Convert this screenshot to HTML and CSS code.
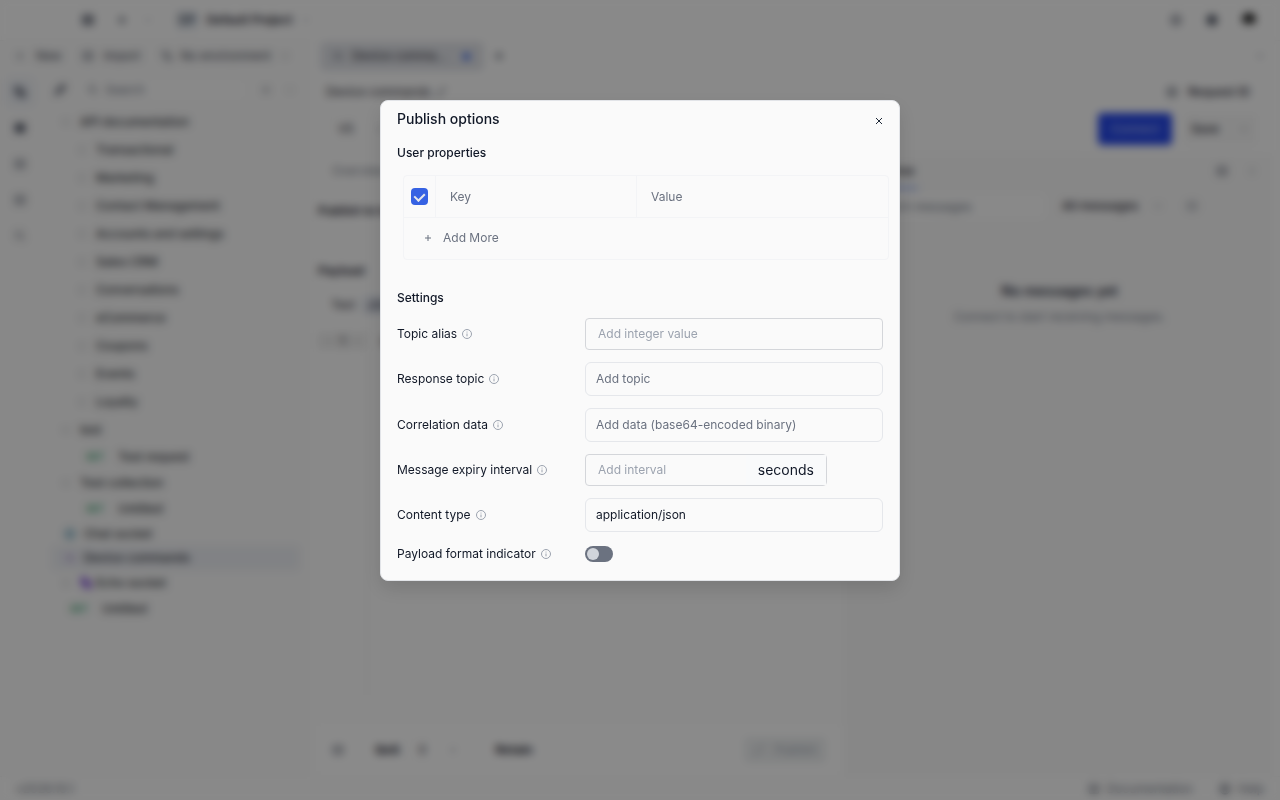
FILE: index.html
```html
<!DOCTYPE html>
<html lang="en">
<head>
  <meta charset="UTF-8" />
  <meta name="viewport" content="width=device-width, initial-scale=1.0">
  <title>Device commands</title>
  <link rel="stylesheet" href="styles.css">
</head>
<body>

  <!-- Shared icons -->
  <svg class="sprite" aria-hidden="true">
    <symbol id="down" viewBox="0 0 12 12"><path d="M3 4.5l3 3 3-3" /></symbol>
    <symbol id="right" viewBox="0 0 12 12"><path d="M4.5 3l3 3-3 3" /></symbol>
    <symbol id="plus" viewBox="0 0 12 12"><path d="M6 2.5v7M2.5 6h7" /></symbol>
    <symbol id="box" viewBox="0 0 12 12"><path d="M1.5 2h9v8h-9zM1.5 5h9M6 5v5" /></symbol>
    <symbol id="search" viewBox="0 0 12 12"><path d="M5 1.5a3.5 3.5 0 1 0 0 7 3.5 3.5 0 0 0 0-7M7.5 7.5l3 3" /></symbol>
    <symbol id="blocks" viewBox="0 0 12 12"><path d="M1.5 1.5h5v5h-5zM5.5 5.5h5v5h-5z" /></symbol>
    <symbol id="globe" viewBox="0 0 12 12"><path d="M6 1a5 5 0 1 0 0 10A5 5 0 0 0 6 1M1 6h10M6 1c-3 3-3 7 0 10c3-3 3-7 0-10" /></symbol>
    <symbol id="pencil" viewBox="0 0 12 12"><path d="M2 10l1-3 6-6 2 2-6 6z" /></symbol>
    <symbol id="wave" viewBox="0 0 12 12"><path d="M1 4h10M1 8h10M4 2v2M8 8v2" /></symbol>
    <symbol id="info" viewBox="0 0 12 12"><circle cx="6" cy="6" r="4.5" /><path d="M6 5.5v2.8M6 3.6v.9" /></symbol>
  </svg>

  <div class="app">
    <header class="topbar">
      <svg class="icon heavy"><use href="#box" /></svg>
      <svg class="icon heavy"><use href="#plus" /></svg>
      <svg class="icon faint"><use href="#down" /></svg>
      <span class="project-badge">DP</span>
      <strong class="project-name">Default Project</strong>
      <svg class="icon faint chevron"><use href="#down" /></svg>
      <div class="topbar-right">
        <svg class="icon"><use href="#globe" /></svg>
        <svg class="icon solid"><use href="#globe" /></svg>
        <span class="avatar"></span>
      </div>
    </header>

    <div class="workspace">
      <aside class="sidebar">
        <div class="sidebar-tools">
          <button class="plain"><svg class="icon"><use href="#plus" /></svg>New</button>
          <button class="plain"><svg class="icon"><use href="#box" /></svg>Import</button>
          <button class="plain environment"><svg class="icon"><use href="#blocks" /></svg>No environment<svg class="icon"><use href="#down" /></svg></button>
        </div>
        <div class="sidebar-body">
          <nav class="rail">
            <a class="rail-item active" href="#" aria-label="Collections"><svg class="icon"><use href="#blocks" /></svg></a>
            <a class="rail-item" href="#" aria-label="Environments"><svg class="icon solid"><use href="#box" /></svg></a>
            <a class="rail-item" href="#" aria-label="Servers"><svg class="icon"><use href="#box" /></svg></a>
            <a class="rail-item" href="#" aria-label="Tests"><svg class="icon"><use href="#box" /></svg></a>
            <a class="rail-item" href="#" aria-label="History"><svg class="icon"><use href="#search" /></svg></a>
          </nav>
          <div class="explorer">
            <div class="search-row">
              <svg class="icon heavy"><use href="#pencil" /></svg>
              <label class="search"><svg class="icon"><use href="#search" /></svg><input type="text" placeholder="Search" aria-label="Search"></label>
              <svg class="icon"><use href="#plus" /></svg>
              <svg class="icon faint"><use href="#down" /></svg>
            </div>
            <ul class="tree">
              <li class="folder"><svg class="icon"><use href="#down" /></svg>API documentation</li>
              <li class="folder child"><svg class="icon"><use href="#right" /></svg>Transactional</li>
              <li class="folder child"><svg class="icon"><use href="#right" /></svg>Marketing</li>
              <li class="folder child"><svg class="icon"><use href="#right" /></svg>Contact Management</li>
              <li class="folder child"><svg class="icon"><use href="#right" /></svg>Accounts and settings</li>
              <li class="folder child"><svg class="icon"><use href="#right" /></svg>Sales CRM</li>
              <li class="folder child"><svg class="icon"><use href="#right" /></svg>Conversations</li>
              <li class="folder child"><svg class="icon"><use href="#right" /></svg>eCommerce</li>
              <li class="folder child"><svg class="icon"><use href="#right" /></svg>Coupons</li>
              <li class="folder child"><svg class="icon"><use href="#right" /></svg>Events</li>
              <li class="folder child"><svg class="icon"><use href="#right" /></svg>Loyalty</li>
              <li class="folder"><svg class="icon"><use href="#down" /></svg>test</li>
              <li class="request nested"><span class="method">GET</span>Test request</li>
              <li class="request-folder"><svg class="icon"><use href="#down" /></svg>Test collection</li>
              <li class="request nested"><span class="method">GET</span>Untitled</li>
              <li class="socket"><svg class="icon teal"><use href="#globe" /></svg>Chat socket</li>
              <li class="socket selected"><svg class="icon purple"><use href="#wave" /></svg>Device commands</li>
              <li class="request-folder"><svg class="icon"><use href="#right" /></svg><span class="echo"><svg class="icon violet"><use href="#blocks" /></svg>Echo socket</span></li>
              <li class="request"><span class="method">GET</span>Untitled</li>
            </ul>
          </div>
        </div>
      </aside>

      <main class="editor">
        <div class="tabs">
          <div class="tab"><svg class="icon"><use href="#wave" /></svg>Device comma...<span class="dot"></span></div>
          <svg class="icon heavy"><use href="#plus" /></svg>
          <svg class="icon push"><use href="#down" /></svg>
        </div>
        <div class="title-row">
          <span>Device commands</span>
          <svg class="icon"><use href="#pencil" /></svg>
          <button class="plain push"><svg class="icon"><use href="#globe" /></svg>Request ID</button>
        </div>
        <div class="url-row">
          <div class="url-bar"><span>V5</span><svg class="icon"><use href="#down" /></svg></div>
          <button class="connect">Connect</button>
          <button class="save">Save<svg class="icon"><use href="#down" /></svg></button>
        </div>
        <div class="panes">
          <section class="message-pane">
            <div class="pane-tabs"><span>Overview</span></div>
            <div class="message-body">
              <h3>Publish to topic</h3>
              <h3>Payload</h3>
              <div class="formats"><span>Text</span><span class="format active">JSON</span></div>
              <div class="code">
                <div class="gutter"><span class="line">1</span></div>
                <div class="code-text">{}</div>
              </div>
            </div>
            <div class="publish-bar">
              <svg class="icon"><use href="#box" /></svg>
              <strong class="qos">QoS</strong>
              <span class="qos-select">0<svg class="icon"><use href="#down" /></svg></span>
              <strong>Retain</strong>
              <button class="publish" disabled><svg class="icon"><use href="#pencil" /></svg>Publish</button>
            </div>
          </section>
          <section class="response-pane">
            <div class="pane-tabs">
              <span class="pane-tab">Response</span>
              <svg class="icon push"><use href="#box" /></svg>
              <svg class="icon"><use href="#right" /></svg>
            </div>
            <div class="filters">
              <input class="filter-input" type="text" placeholder="Search messages" aria-label="Search messages">
              <button class="plain filter">All messages<svg class="icon"><use href="#down" /></svg></button>
              <svg class="icon faint"><use href="#box" /></svg>
            </div>
            <div class="empty">
              <h2>No messages yet</h2>
              <p>Connect to start receiving messages.</p>
            </div>
          </section>
        </div>
      </main>
    </div>

    <footer class="status">
      <span>v2026.10.1</span>
      <a href="#" class="push"><svg class="icon"><use href="#box" /></svg>Documentation</a>
      <a href="#"><svg class="icon"><use href="#globe" /></svg>Help</a>
    </footer>
  </div>

  <!-- Publish options modal -->
  <div class="overlay">
    <div class="modal" role="dialog" aria-labelledby="modalTitle">
      <div class="modal-header">
        <h1 id="modalTitle">Publish options</h1>
        <button class="close" aria-label="Close"><svg viewBox="0 0 12 12"><path d="M3 3l6 6M9 3l-6 6" /></svg></button>
      </div>

      <h2 class="modal-subtitle">User properties</h2>
      <table class="properties">
        <tr>
          <td class="check-cell"><input type="checkbox" class="check" aria-label="Enable all" checked></td>
          <th class="key-cell">Key</th>
          <th>Value</th>
        </tr>
        <tr>
          <td colspan="3" class="add-cell"><button class="add-more"><svg viewBox="0 0 12 12"><path d="M6 3v6M3 6h6" /></svg>Add More</button></td>
        </tr>
      </table>

      <h2 class="modal-subtitle">Settings</h2>
      <div class="settings">
        <div class="setting">
          <label for="topicAlias">Topic alias</label><svg class="info"><use href="#info" /></svg>
          <input type="text" id="topicAlias" class="field number" placeholder="Add integer value">
        </div>
        <div class="setting">
          <label for="responseTopic">Response topic</label><svg class="info"><use href="#info" /></svg>
          <input type="text" id="responseTopic" class="field" placeholder="Add topic">
        </div>
        <div class="setting">
          <label for="correlation">Correlation data</label><svg class="info"><use href="#info" /></svg>
          <input type="text" id="correlation" class="field" placeholder="Add data (base64-encoded binary)">
        </div>
        <div class="setting">
          <label for="expiry">Message expiry interval</label><svg class="info"><use href="#info" /></svg>
          <div class="interval">
            <input type="text" id="expiry" placeholder="Add interval">
            <span class="unit">seconds</span>
          </div>
        </div>
        <div class="setting">
          <label for="contentType">Content type</label><svg class="info"><use href="#info" /></svg>
          <input type="text" id="contentType" class="field" value="application/json">
        </div>
        <div class="setting">
          <label for="payloadFormat">Payload format indicator</label><svg class="info"><use href="#info" /></svg>
          <input type="checkbox" id="payloadFormat" class="toggle">
        </div>
      </div>
    </div>
  </div>

</body>
</html>
```
FILE: styles.css
```css
* {
  box-sizing: border-box;
}

body, h1, h2, h3, p, ul {
  margin: 0;
  padding: 0;
}

body {
  font-family: Inter, "Liberation Sans", sans-serif;
  font-size: 12px;
  line-height: 16px;
  color: #1f2430;
  background: #fafafa;
}

button, input {
  font: inherit;
  color: inherit;
  margin: 0;
}

button {
  border: none;
  background: none;
  padding: 0;
}

a {
  color: inherit;
  text-decoration: none;
}

.sprite {
  display: none;
}

.icon {
  width: 12px;
  height: 12px;
  flex: none;
  fill: none;
  stroke: #4b5160;
  stroke-width: 1;
}

.icon.heavy { stroke-width: 2; }
.icon.faint { stroke: #8a8f9a; }
.icon.solid { fill: #4b5160; }
.icon.teal { stroke: #3f88a8; }
.icon.purple { stroke: #8f6fc0; }
.icon.violet { stroke: #6a30d0; stroke-width: 2; }

.push {
  margin-left: auto;
}

.plain {
  display: flex;
  align-items: center;
  gap: 10px;
}

/* App shell */
.app {
  display: flex;
  flex-direction: column;
  height: 100vh;
  overflow: hidden;
}

.topbar {
  display: flex;
  align-items: center;
  height: 40px;
  padding: 0 24px 0 82px;
  gap: 22px;
}

.topbar .icon.faint {
  margin-left: -8px;
}

.topbar .icon.chevron {
  margin-left: -14px;
}

.project-badge {
  padding: 1px 3px;
  border-radius: 4px;
  background: #dde3ea;
  color: #4b5160;
  font-weight: 600;
}

.project-name {
  margin-left: -14px;
  font-weight: 600;
}

.topbar-right {
  display: flex;
  align-items: center;
  gap: 24px;
  margin-left: auto;
}

.avatar {
  width: 14px;
  height: 14px;
  border-radius: 50%;
  border-bottom: 4px solid #ddd;
  background: #111;
}

.workspace {
  display: flex;
  flex: 1;
  min-height: 0;
}

.sidebar {
  display: flex;
  flex-direction: column;
  width: 308px;
  background: #f7f7f7;
  border-top: 1px solid #f0f0f0;
  border-right: 1px solid #f0f0f0;
}

.sidebar-tools {
  display: flex;
  align-items: center;
  height: 30px;
  padding-left: 14px;
  gap: 20px;
  color: #3a404d;
}

.sidebar-tools .environment {
  gap: 8px;
}

.sidebar-body {
  display: flex;
  flex: 1;
}

.rail {
  display: flex;
  flex-direction: column;
  align-items: center;
  flex: none;
  width: 40px;
  padding-top: 7px;
  gap: 8px;
}

.rail-item {
  display: grid;
  place-items: center;
  width: 28px;
  height: 28px;
  border-radius: 6px;
}

.rail-item.active {
  background: #eceff4;
}

.rail-item.active .icon {
  stroke-width: 2;
}

.explorer {
  flex: 1;
  min-width: 0;
  padding: 5px 8px 0 12px;
}

.search-row {
  display: flex;
  align-items: center;
  height: 28px;
  padding-left: 2px;
  gap: 12px;
}

.search {
  display: flex;
  align-items: center;
  width: 170px;
  height: 26px;
  padding: 0 8px;
  gap: 6px;
  border: 1px solid #f0f0f0;
  border-radius: 6px;
  background: #fafafa;
}

.search input {
  width: 100%;
  padding: 0;
  border: none;
  background: none;
}

::placeholder {
  color: #6b7280;
  opacity: 1;
}

.tree {
  list-style: none;
  padding-top: 4px;
  font-weight: 500;
  color: #30333a;
}

.tree li {
  display: flex;
  align-items: center;
  height: 26px;
  padding-left: 8px;
  gap: 8px;
}

.tree .folder {
  height: 28px;
}

.tree .child {
  padding-left: 24px;
}

.tree .nested {
  padding-left: 34px;
}

.tree .request {
  gap: 10px;
}

.tree .request:not(.nested) {
  padding-left: 18px;
}

.tree .socket {
  height: 24px;
  padding-left: 12px;
}

.tree .selected {
  border-radius: 4px;
  background: #ebedf2;
}

.echo {
  display: flex;
  align-items: center;
  gap: 4px;
}

.method {
  width: 22px;
  font-size: 9px;
  font-weight: 600;
  color: #16935a;
}

.editor {
  display: flex;
  flex: 1;
  flex-direction: column;
  min-width: 0;
  padding: 0 6px 0 10px;
  border-top: 1px solid #f2f2f2;
}

.tabs {
  display: flex;
  align-items: center;
  height: 30px;
  padding: 0 8px 0 3px;
  gap: 10px;
}

.tab {
  display: flex;
  align-items: center;
  width: 162px;
  height: 27px;
  padding: 0 10px;
  gap: 8px;
  border: 1px solid #c9ced8;
  border-radius: 4px;
  background: #dfe1e6;
}

.dot {
  width: 7px;
  height: 7px;
  margin-left: auto;
  margin-right: 2px;
  border-radius: 50%;
  background: #2d5be3;
}

.title-row {
  display: flex;
  align-items: center;
  height: 42px;
  padding: 0 24px 0 8px;
  gap: 4px;
}

.title-row .plain {
  font-weight: 500;
}

.url-row {
  display: flex;
  height: 32px;
  padding: 0 16px 0 8px;
  gap: 12px;
}

.url-bar {
  display: flex;
  flex: 1;
  align-items: center;
  padding-left: 11px;
  gap: 20px;
  border: 1px solid #efefef;
  border-radius: 6px;
}

.connect {
  width: 74px;
  border-radius: 4px;
  background: #2446e5;
  color: #a9bbf7;
  font-weight: 500;
}

.save {
  display: flex;
  align-items: center;
  justify-content: space-between;
  width: 74px;
  padding: 0 8px 0 7px;
  border-radius: 4px;
  background: #f5f5f5;
  font-weight: 500;
}

.panes {
  display: flex;
  flex: 1;
  min-height: 0;
  margin-top: 8px;
}

.message-pane {
  display: flex;
  flex-direction: column;
  width: 526px;
}

.message-pane .pane-tabs {
  padding-left: 14px;
  color: #777c88;
}

.pane-tabs {
  display: flex;
  align-items: center;
  height: 36px;
  gap: 18px;
}

.message-body {
  display: flex;
  flex: 1;
  flex-direction: column;
  padding-top: 14px;
}

.message-body h3 {
  height: 60px;
  font-size: 12px;
  font-weight: 600;
}

.message-body h3 + h3 {
  height: 24px;
}

.formats {
  display: flex;
  align-items: center;
  height: 36px;
  padding-left: 13px;
  gap: 8px;
}

.format {
  padding: 1px 4px;
  border-radius: 4px;
  background: #dfe4ee;
  font-size: 11px;
}

.code {
  display: flex;
  flex: 1;
  margin: 4px 10px 28px 0;
  border-bottom: 1px solid #f0f0f0;
}

.gutter {
  width: 50px;
  padding-top: 6px;
  border-right: 2px solid #efefef;
}

.line {
  display: block;
  padding-left: 22px;
  background: #ebebeb;
}

.code-text {
  padding: 6px 12px;
}

.publish-bar {
  display: flex;
  align-items: center;
  height: 54px;
  padding: 0 18px 0 14px;
  gap: 24px;
  border-top: 1px solid #f3f3f3;
  background: #fcfcfc;
}

.publish-bar .qos {
  margin-left: 7px;
}

.qos-select {
  display: flex;
  align-items: center;
  justify-content: space-between;
  width: 64px;
  height: 30px;
  margin-left: -16px;
  padding: 0 12px 0 10px;
  border: 1px solid #f2f2f2;
  border-radius: 4px;
}

.publish {
  display: flex;
  align-items: center;
  justify-content: center;
  width: 82px;
  height: 26px;
  margin-left: auto;
  gap: 10px;
  border-radius: 4px;
  background: #eceeef;
  color: #a0a8b4;
}

.publish .icon {
  stroke: #a0a8b4;
}

.response-pane {
  flex: 1;
  padding: 0 8px;
  border-left: 1px solid #f0f0f0;
  background: #f6f6f6;
}

.response-pane .pane-tabs {
  padding: 0 8px 0 2px;
}

.pane-tab {
  padding: 10px 3px 8px;
  border-bottom: 2px solid #6f93ee;
  font-weight: 500;
}

.filters {
  display: flex;
  align-items: center;
  gap: 10px;
  height: 34px;
}

.filter-input {
  width: 194px;
  height: 28px;
  padding-left: 17px;
  border: 1px solid #f0f0f0;
  border-radius: 6px;
  background: #fafafa;
}

.filter {
  height: 28px;
  padding: 0 12px 0 5px;
  gap: 14px;
  font-weight: 500;
}

.empty {
  padding-top: 56px;
  text-align: center;
  color: #737988;
}

.empty h2 {
  font-size: 14px;
  line-height: 24px;
  font-weight: 600;
  color: #2b3040;
}

.empty p {
  margin-top: 6px;
}

.status {
  display: flex;
  align-items: center;
  height: 24px;
  padding: 0 16px;
  gap: 26px;
  border-top: 1px solid #f2f2f2;
  color: #6b717d;
}

.status a {
  display: flex;
  align-items: center;
  gap: 7px;
}

/* Modal */
.overlay {
  position: fixed;
  top: 0;
  left: 0;
  display: flex;
  align-items: flex-start;
  justify-content: center;
  width: 100%;
  height: 100%;
  padding-top: 100px;
  background: rgba(0, 0, 0, 0.45);
  backdrop-filter: blur(4px);
}

.modal {
  width: 520px;
  max-width: 90%;
  padding: 8px 16px 16px;
  border: 1px solid #e2e4e8;
  border-radius: 8px;
  background: #fafafa;
  box-shadow: 0 8px 20px rgba(0, 0, 0, 0.12);
  color: #111827;
}

.modal-header {
  display: flex;
  justify-content: space-between;
  height: 36px;
}

.modal-header h1 {
  font-size: 14px;
  line-height: 20px;
  font-weight: 500;
}

.close {
  width: 12px;
  height: 24px;
  margin-right: -2px;
}

.close svg {
  display: block;
  width: 12px;
  fill: none;
  stroke: #1f2937;
  stroke-width: 1;
}

.modal-subtitle {
  font-size: 12px;
  line-height: 16px;
  font-weight: 500;
}

.properties {
  width: 100%;
  margin: 14px 0 30px 6px;
  border: 1px solid #f3f4f6;
  border-radius: 4px;
  border-spacing: 0;
  color: #6b7280;
}

.properties th,
.properties td {
  height: 41px;
  padding: 0;
  text-align: left;
  font-weight: 400;
}

.properties th {
  padding-left: 14px;
  border-left: 1px solid #f3f4f6;
}

.properties .check-cell {
  width: 31px;
  padding-left: 7px;
}

.properties .key-cell {
  width: 201px;
}

.properties .add-cell {
  height: 42px;
  padding: 0 0 2px 18px;
  border-top: 1px solid #f3f4f6;
}

.check {
  display: grid;
  place-items: center;
  width: 17px;
  height: 17px;
  appearance: none;
  border-radius: 4px;
  background: #3662e3;
}

.check:checked::after {
  content: '';
  width: 5px;
  height: 8px;
  margin-bottom: 2px;
  border: solid #e5e7eb;
  border-width: 0 2px 2px 0;
  transform: rotate(45deg);
}

.add-more {
  display: flex;
  align-items: center;
  gap: 9px;
}

.add-more svg {
  width: 12px;
  fill: none;
  stroke: #6b7280;
}

.settings {
  display: flex;
  flex-direction: column;
  gap: 12px;
  margin-top: 12px;
}

.setting {
  display: flex;
  align-items: center;
  min-height: 20px;
}

.info {
  width: 12px;
  height: 12px;
  margin-left: 4px;
  fill: none;
  stroke: #9ca3af;
  stroke-width: 1;
}

.field,
.interval {
  width: 298px;
  height: 34px;
  margin-left: auto;
  padding: 0 10px 2px;
  border: 1px solid #e5e7eb;
  border-radius: 6px;
  background: #fafafa;
}

.field.number,
.interval {
  height: 32px;
  padding: 0 12px 2px;
  border-color: #d4d6da;
  border-radius: 4px;
}

.number::placeholder,
.interval ::placeholder {
  color: #9ca3af;
}

.interval {
  display: flex;
  align-items: center;
  width: 242px;
  margin-right: 56px;
  padding: 0;
}

.interval input {
  flex: 1;
  min-width: 0;
  padding: 0 12px;
  border: none;
  background: none;
}

.unit {
  padding: 0 12px;
  background: #f9fafb;
  font-size: 14px;
  line-height: 30px;
}

.toggle {
  width: 28px;
  height: 16px;
  margin-left: auto;
  margin-right: 270px;
  padding: 2px;
  appearance: none;
  border-radius: 8px;
  background: #6b7280;
}

.toggle::before {
  content: '';
  display: block;
  width: 12px;
  height: 12px;
  border-radius: 50%;
  background: #d1d5db;
}

.toggle:checked::before {
  margin-left: auto;
}
```
